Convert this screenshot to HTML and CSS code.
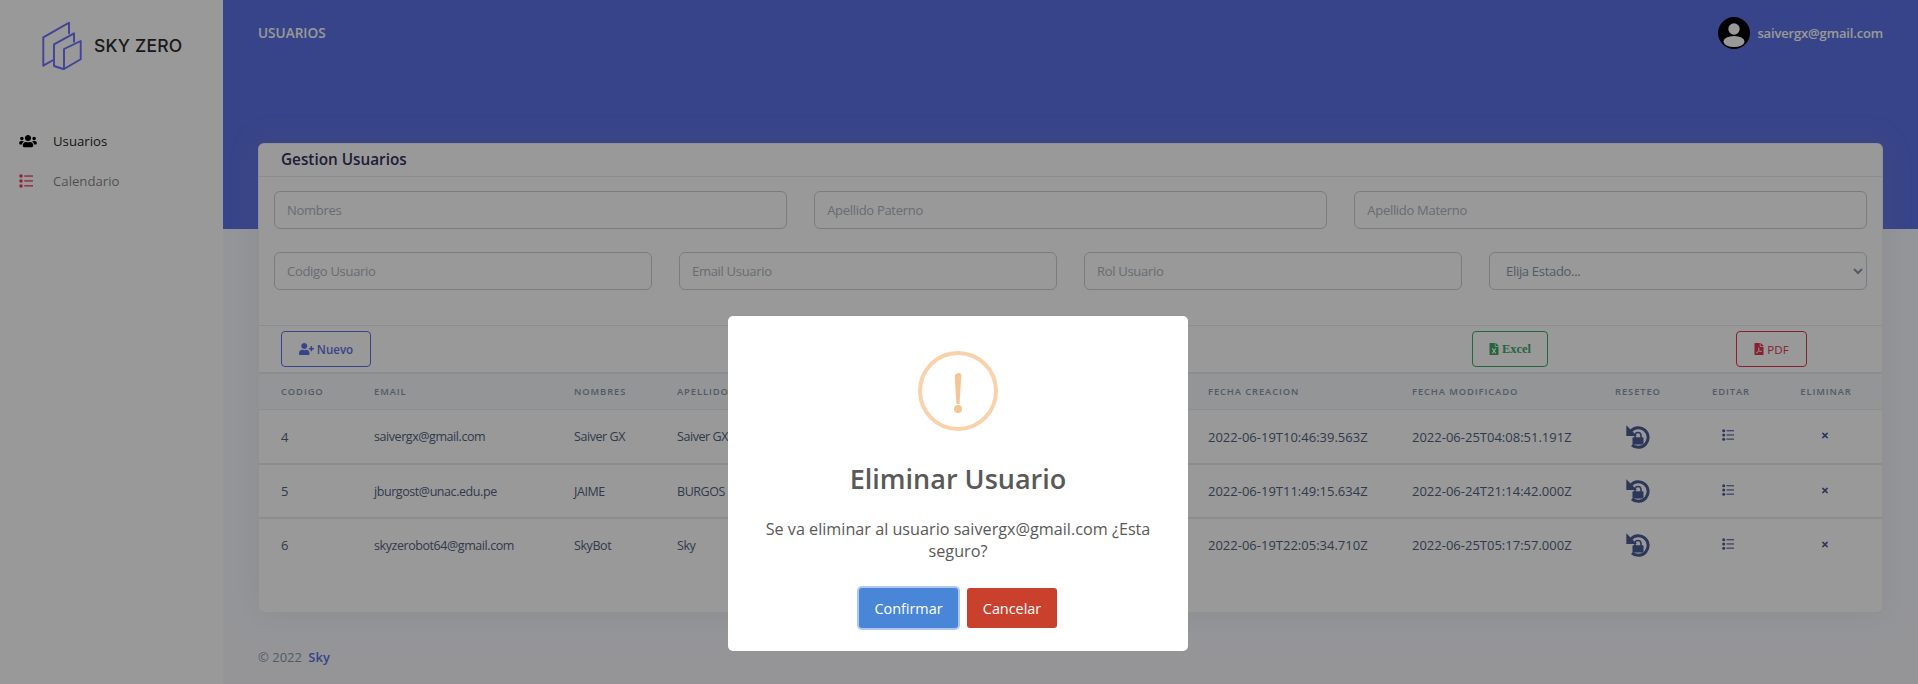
FILE: index.html
```html
<!DOCTYPE html>
<html lang="es">
<head>
    <meta charset="UTF-8">
    <meta name="viewport" content="width=device-width, initial-scale=1.0">
    <title>Usuarios</title>
    <link rel="stylesheet" href="styles.css">
</head>
<body>
    <svg class="icon-defs">
        <symbol id="i-list" viewBox="0 0 12 12">
            <circle cx="1.700" cy="1.800" r="1.500"/><circle cx="1.700" cy="6" r="1.500"/><circle cx="1.700" cy="10.200" r="1.500"/>
            <rect x="4.500" y="1.200" width="7.500" height="1.100"/><rect x="4.500" y="5.400" width="7.500" height="1.100"/><rect x="4.500" y="9.600" width="7.500" height="1.100"/>
        </symbol>
        <symbol id="i-times" viewBox="0 0 352 512"><path d="M242.72 256l100.07-100.07c12.28-12.28 12.28-32.19 0-44.48l-22.24-22.24c-12.28-12.28-32.19-12.28-44.48 0L176 189.28 75.93 89.21c-12.28-12.28-32.19-12.28-44.48 0L9.21 111.45c-12.28 12.28-12.28 32.19 0 44.48L109.28 256 9.21 356.07c-12.28 12.28-12.28 32.19 0 44.48l22.24 22.24c12.28 12.28 32.2 12.28 44.48 0L176 322.72l100.07 100.07c12.28 12.28 32.2 12.28 44.48 0l22.24-22.24c12.28-12.28 12.28-32.19 0-44.48L242.72 256z"/></symbol>
        <symbol id="i-reset" viewBox="0 0 24 24">
            <path d="M5 6A9.800 9.800 0 1 1 6 20" fill="none" stroke="currentColor" stroke-width="3"/>
            <path d="M0.300 0.300L0.300 11L11 11z"/>
            <rect x="6.500" y="12.300" width="11" height="7.200" rx="1"/>
            <path d="M9 13V10.500a3 3 0 0 1 6 0V13" fill="none" stroke="currentColor" stroke-width="1.600"/>
        </symbol>
    </svg>

    <div class="layout">
        <aside class="sidebar">
            <div class="brand">
                <svg class="brand-logo" viewBox="0 0 40 48">
                    <path d="M11.300 38L1.300 43.700V15.300L27 0.700V11.300"/>
                    <path d="M32 19.700V11.300L12 22.300V44L21.300 47"/>
                    <path d="M22 27L38.700 19V37.300L22 47z"/>
                </svg>
                <span class="brand-name">SKY ZERO</span>
            </div>
            <nav class="side-nav">
                <a class="side-link active">
                    <svg class="side-icon" viewBox="0 0 640 512"><path d="M96 224c35.300 0 64-28.700 64-64s-28.700-64-64-64-64 28.700-64 64 28.700 64 64 64zm448 0c35.300 0 64-28.700 64-64s-28.700-64-64-64-64 28.700-64 64 28.700 64 64 64zm32 32h-64c-17.600 0-33.500 7.100-45.100 18.600 40.300 22.100 68.900 62 75.100 109.400h66c17.700 0 32-14.300 32-32v-32c0-35.300-28.700-64-64-64zm-256 0c61.900 0 112-50.100 112-112S381.900 32 320 32 208 82.100 208 144s50.100 112 112 112zm76.800 32h-8.300c-20.800 10-43.900 16-68.500 16s-47.600-6-68.500-16h-8.300C179.600 288 128 339.600 128 403.200V432c0 26.500 21.500 48 48 48h288c26.500 0 48-21.500 48-48v-28.800c0-63.600-51.600-115.200-115.200-115.200zm-223.700-13.400C161.500 263.100 145.600 256 128 256H64c-35.300 0-64 28.700-64 64v32c0 17.700 14.300 32 32 32h65.900c6.300-47.400 34.900-87.300 75.200-109.400z"/></svg>
                    Usuarios
                </a>
                <a class="side-link">
                    <svg class="side-icon red"><use href="#i-list"/></svg>
                    Calendario
                </a>
            </nav>
        </aside>

        <div class="main">
            <header class="topbar">
                <span class="page-title">USUARIOS</span>
                <div class="user">
                    <svg class="avatar" viewBox="0 0 32 32">
                        <circle cx="16" cy="16" r="16" fill="#000"/>
                        <circle cx="16" cy="12" r="5.700" fill="#fff"/>
                        <ellipse cx="16" cy="24.500" rx="10.500" ry="5.500" fill="#fff"/>
                    </svg>
                    <span>saivergx@gmail.com</span>
                </div>
            </header>

            <section class="card">
                <h3 class="card-title">Gestion Usuarios</h3>
                <div class="filters">
                    <div class="filter-row three">
                        <input type="text" placeholder="Nombres">
                        <input type="text" placeholder="Apellido Paterno">
                        <input type="text" placeholder="Apellido Materno">
                    </div>
                    <div class="filter-row four">
                        <input type="text" placeholder="Codigo Usuario">
                        <input type="text" placeholder="Email Usuario">
                        <input type="text" placeholder="Rol Usuario">
                        <select>
                            <option>Elija Estado...</option>
                        </select>
                    </div>
                </div>
                <div class="toolbar">
                    <button class="btn-outline blue btn-new">
                        <svg viewBox="0 0 640 512"><path d="M624 208h-64v-64c0-8.800-7.200-16-16-16h-32c-8.800 0-16 7.200-16 16v64h-64c-8.800 0-16 7.200-16 16v32c0 8.800 7.200 16 16 16h64v64c0 8.800 7.200 16 16 16h32c8.800 0 16-7.200 16-16v-64h64c8.800 0 16-7.200 16-16v-32c0-8.800-7.200-16-16-16zm-400 48c70.700 0 128-57.300 128-128S294.700 0 224 0 96 57.300 96 128s57.300 128 128 128zm89.600 32h-16.700c-22.200 10.200-46.900 16-72.900 16s-50.600-5.800-72.900-16h-16.700C60.200 288 0 348.200 0 422.400V464c0 26.500 21.500 48 48 48h352c26.500 0 48-21.500 48-48v-41.600c0-74.200-60.200-134.400-134.400-134.400z"/></svg>
                        Nuevo
                    </button>
                    <button class="btn-outline green btn-excel">
                        <svg viewBox="0 0 384 512"><path d="M224 136V0H24C10.700 0 0 10.700 0 24v464c0 13.300 10.700 24 24 24h336c13.300 0 24-10.700 24-24V160H248c-13.200 0-24-10.800-24-24zm60.100 106.500L224 336l60.100 93.500c5.100 8-.6 18.500-10.100 18.500h-34.900c-4.400 0-8.500-2.400-10.600-6.300C208.900 405.500 192 373 192 373c-6.400 14.800-10 20-36.600 68.800-2.100 3.900-6.100 6.300-10.500 6.300H110c-9.500 0-15.200-10.500-10.100-18.500l60.300-93.500-60.300-93.500c-5.200-8 .6-18.500 10.100-18.500h34.800c4.400 0 8.500 2.400 10.600 6.300 26.100 48.800 20 33.600 36.600 68.500 0 0 6.100-11.700 36.600-68.500 2.100-3.900 6.200-6.300 10.600-6.300H274c9.500-.1 15.200 10.400 10.100 18.400zM384 121.900v6.100H256V0h6.100c6.400 0 12.500 2.500 17 7l97.900 98c4.500 4.500 7 10.600 7 16.900z"/></svg>
                        Excel
                    </button>
                    <button class="btn-outline red btn-pdf">
                        <svg viewBox="0 0 384 512"><path d="M181.900 256.100c-5-16-4.900-46.900-2-46.900 8.400 0 7.600 36.900 2 46.900zm-1.700 47.200c-7.700 20.200-17.300 43.300-28.400 62.700 18.300-7 39-17.200 62.900-21.900-12.700-9.600-24.900-23.400-34.500-40.800zM86.100 428.100c0 .8 13.200-5.400 34.900-40.200-6.700 6.300-29.100 24.500-34.900 40.200zM248 160h136v328c0 13.300-10.700 24-24 24H24c-13.300 0-24-10.700-24-24V24C0 10.700 10.700 0 24 0h200v136c0 13.200 10.800 24 24 24zm-8 171.800c-20-12.200-33.300-29-42.700-53.800 4.500-18.500 11.600-46.600 6.200-64.200-4.700-29.400-42.400-26.500-47.800-6.800-5 18.300-.4 44.100 8.100 77-11.600 27.600-28.700 64.600-40.800 85.800-.1 0-.1.100-.2.100-27.100 13.900-73.600 44.500-54.500 68 5.600 6.900 16 10 21.500 10 17.900 0 35.700-18 61.100-61.800 25.800-8.500 54.100-19.100 79-23.200 21.700 11.800 47.100 19.500 64 19.500 29.200 0 31.200-32 19.700-43.400-13.900-13.600-54.300-9.700-73.600-7.200zM377 105L279 7c-4.500-4.500-10.600-7-17-7h-6v128h128v-6.100c0-6.300-2.500-12.400-7-16.900zm-74.100 255.300c4.100-2.700-2.500-11.900-42.800-9 37.100 15.800 42.800 9 42.800 9z"/></svg>
                        PDF
                    </button>
                </div>
                <table class="users">
                    <colgroup>
                        <col class="c-code"><col class="c-email"><col class="c-name"><col class="c-last">
                        <col class="c-date"><col class="c-mod"><col class="c-reset"><col class="c-edit"><col class="c-del">
                    </colgroup>
                    <thead>
                        <tr>
                            <th>Codigo</th><th>Email</th><th>Nombres</th><th>Apellido Paterno</th>
                            <th>Fecha Creacion</th><th>Fecha Modificado</th>
                            <th class="center">Reseteo</th><th class="center">Editar</th><th class="center">Eliminar</th>
                        </tr>
                    </thead>
                    <tbody>
                        <tr>
                            <td class="date">4</td><td>saivergx@gmail.com</td><td>Saiver GX</td><td>Saiver GX</td>
                            <td class="date">2022-06-19T10:46:39.563Z</td><td class="date">2022-06-25T04:08:51.191Z</td>
                            <td class="center"><svg class="ic-reset"><use href="#i-reset"/></svg></td>
                            <td class="center"><svg class="ic-edit"><use href="#i-list"/></svg></td>
                            <td class="center"><svg class="ic-del"><use href="#i-times"/></svg></td>
                        </tr>
                        <tr>
                            <td class="date">5</td><td>jburgost@unac.edu.pe</td><td>JAIME</td><td>BURGOS</td>
                            <td class="date">2022-06-19T11:49:15.634Z</td><td class="date">2022-06-24T21:14:42.000Z</td>
                            <td class="center"><svg class="ic-reset"><use href="#i-reset"/></svg></td>
                            <td class="center"><svg class="ic-edit"><use href="#i-list"/></svg></td>
                            <td class="center"><svg class="ic-del"><use href="#i-times"/></svg></td>
                        </tr>
                        <tr>
                            <td class="date">6</td><td>skyzerobot64@gmail.com</td><td>SkyBot</td><td>Sky</td>
                            <td class="date">2022-06-19T22:05:34.710Z</td><td class="date">2022-06-25T05:17:57.000Z</td>
                            <td class="center"><svg class="ic-reset"><use href="#i-reset"/></svg></td>
                            <td class="center"><svg class="ic-edit"><use href="#i-list"/></svg></td>
                            <td class="center"><svg class="ic-del"><use href="#i-times"/></svg></td>
                        </tr>
                    </tbody>
                </table>
            </section>

            <footer class="footer">© 2022 <a>Sky</a></footer>
        </div>
    </div>

    <div class="overlay">
        <div class="modal">
            <div class="warn-icon"><span class="warn-bar"></span><span class="warn-dot"></span></div>
            <h2>Eliminar Usuario</h2>
            <p>Se va eliminar al usuario saivergx@gmail.com ¿Esta seguro?</p>
            <div class="modal-actions">
                <button class="btn-confirm">Confirmar</button>
                <button class="btn-cancel">Cancelar</button>
            </div>
        </div>
    </div>
</body>
</html>
```

FILE: styles.css
```css
* {
    box-sizing: border-box;
}
html, body {
    height: 100%;
}
body {
    margin: 0;
    overflow: hidden;
    background-color: #f8f9fe;
    font-family: 'Open Sans', 'Liberation Sans', sans-serif;
    color: #525f7f;
}
.icon-defs {
    display: none;
}
.layout {
    display: flex;
    height: 100%;
}

/* sidebar */
.sidebar {
    flex: 0 0 223px;
    background: white;
}
.brand {
    display: flex;
    align-items: center;
    gap: 12px;
    padding: 22px 0 0 42px;
}
.brand-logo {
    width: 40px;
    height: 48px;
    fill: none;
    stroke: #6f6fff;
    stroke-width: 1.9;
    stroke-linejoin: round;
    stroke-linecap: round;
}
.brand-name {
    margin-top: -2px;
    font-family: Inter, 'Liberation Sans', sans-serif;
    font-size: 17.5px;
    font-weight: 500;
    letter-spacing: 0.2px;
    color: #2b2b2b;
    white-space: nowrap;
}
.side-nav {
    display: flex;
    flex-direction: column;
    padding-top: 51px;
}
.side-link {
    display: flex;
    align-items: center;
    height: 40px;
    padding-left: 19px;
    font-size: 13.2px;
    color: rgba(0,0,0,0.5);
}
.side-link.active {
    color: rgba(0,0,0,0.9);
}
.side-icon {
    width: 18px;
    height: 14px;
    margin-right: 16px;
    fill: #000;
}
.side-icon.red {
    width: 14px;
    margin-right: 20px;
    fill: #f5365c;
}

/* main */
.main {
    flex: 1;
    min-width: 0;
}
.topbar {
    display: flex;
    justify-content: space-between;
    height: 229px;
    padding: 17px 35px 0 35px;
    background-color: #5e72e4;
    color: white;
}
.page-title {
    font-size: 13.6px;
    font-weight: 600;
    line-height: 32px;
}
.user {
    display: flex;
    align-items: flex-start;
    gap: 7px;
    font-size: 13px;
    font-weight: 600;
    letter-spacing: -0.15px;
    line-height: 32px;
}
.avatar {
    width: 32px;
    height: 32px;
}

/* card */
.card {
    height: 470px;
    margin: -86px 35px 0 35px;
    background: white;
    border: 1px solid rgba(0,0,0,0.05);
    border-radius: 6px;
    box-shadow: 0 0 32px 0 rgba(136,152,170,0.15);
}
.card-title {
    height: 33px;
    margin: 0;
    padding-left: 22px;
    border-bottom: 1px solid #e9ecef;
    font-size: 15.3px;
    font-weight: 600;
    line-height: 31px;
    color: #32325d;
}
.filters {
    height: 149px;
    padding: 14px 15px 0 15px;
    border-bottom: 1px solid #e9ecef;
}
.filter-row {
    display: grid;
    gap: 27.5px;
    margin-bottom: 23px;
}
.filter-row.three {
    grid-template-columns: repeat(3, 1fr);
}
.filter-row.four {
    gap: 27px;
    grid-template-columns: repeat(4, 1fr);
}
input, select {
    width: 100%;
    height: 38px;
    padding: 0 12px;
    background: white;
    border: 1px solid #cad1d7;
    border-radius: 6px;
    font-family: inherit;
    font-size: 13px;
    letter-spacing: -0.3px;
    color: #8898aa;
}
input::placeholder {
    color: #adb5bd;
}
.toolbar {
    display: flex;
    height: 46px;
    padding: 5px 0 0 22px;
}
.btn-outline {
    display: flex;
    align-items: center;
    justify-content: center;
    gap: 3px;
    height: 36px;
    background: white;
    border: 1px solid;
    border-radius: 4px;
    font-family: inherit;
    font-size: 11.6px;
    font-weight: 600;
}
.btn-outline svg {
    height: 12px;
    fill: currentColor;
}
.btn-outline.blue {
    color: #5e72e4;
    border-color: #5e72e4;
}
.btn-outline.green {
    color: #3fa866;
    border-color: #3fa866;
}
.btn-outline.red {
    color: #e0374f;
    border-color: #e0374f;
}
.btn-new {
    width: 90px;
}
.btn-new svg {
    width: 15px;
}
.btn-excel {
    width: 76px;
    margin-left: auto;
    font-family: 'Liberation Serif', serif;
    font-size: 12.5px;
    font-weight: 700;
}
.btn-excel svg, .btn-pdf svg {
    width: 10px;
}
.btn-pdf {
    width: 71px;
    margin: 0 75px 0 188px;
    font-weight: 400;
}

/* table */
.users {
    width: 100%;
    table-layout: fixed;
    border-collapse: separate;
    border-spacing: 0;
}
.c-code { width: 115px; }
.c-email { width: 200px; }
.c-name { width: 103px; }
.c-last { width: 531px; }
.c-date { width: 204px; }
.c-mod { width: 183px; }
.c-reset { width: 86px; }
.c-edit { width: 100px; }
.c-del { width: 101px; }
.users th {
    height: 38px;
    padding: 0;
    background: #f6f9fc;
    border-top: 2px solid #e9ecef;
    border-bottom: 1px solid #e9ecef;
    font-size: 9.4px;
    font-weight: 600;
    letter-spacing: 0.9px;
    text-align: left;
    text-transform: uppercase;
    color: #8898aa;
    white-space: nowrap;
}
.users td {
    height: 54px;
    padding: 0;
    border-top: 2px solid #e9ecef;
    font-size: 12.5px;
    letter-spacing: -0.43px;
    white-space: nowrap;
}
.users td.date {
    font-size: 13px;
    letter-spacing: 0;
}
.users tbody tr:first-child td {
    height: 53px;
    border-top: 0;
}
.users th:first-child, .users td:first-child {
    padding-left: 22px;
}
.users th:last-child, .users td:last-child {
    padding-right: 11px;
}
.users .center {
    text-align: center;
}
.users svg {
    fill: #4b5c96;
    vertical-align: middle;
}
.ic-reset {
    width: 24px;
    height: 24px;
    color: #4b5c96;
}
.ic-edit {
    width: 12px;
    height: 12px;
    margin: 0 6px 4px 0;
}
.ic-del {
    width: 6px;
    height: 9px;
    margin: 0 2px 4px 0;
}

/* footer */
.footer {
    padding: 34px 0 0 35px;
    font-size: 13px;
    line-height: 20px;
    color: #8898aa;
}
.footer a {
    margin-left: 3px;
    font-weight: 600;
    color: #5e72e4;
}

/* sweet alert */
.overlay {
    position: fixed;
    inset: 0;
    display: flex;
    justify-content: center;
    align-items: flex-start;
    padding-top: 316px;
    background: rgba(0,0,0,0.4);
}
.modal {
    width: 460px;
    height: 335px;
    margin-left: -2px;
    padding: 35px 17px 0 17px;
    background: white;
    border-radius: 5px;
    text-align: center;
}
.warn-icon {
    position: relative;
    width: 80px;
    height: 80px;
    margin: 0 auto;
    border: 4px solid #f9d2ab;
    border-radius: 50%;
}
.warn-bar {
    position: absolute;
    top: 18px;
    left: 32.500px;
    width: 7px;
    height: 31px;
    background: #f7c592;
    border-radius: 4px 4px 1px 1px;
    clip-path: polygon(0 0, 100% 0, 72% 100%, 28% 100%);
}
.warn-dot {
    position: absolute;
    top: 50px;
    left: 32px;
    width: 8px;
    height: 8px;
    background: #f7c592;
    border-radius: 50%;
}
.modal h2 {
    margin: 28px 0 0 0;
    font-size: 27px;
    font-weight: 600;
    line-height: 40px;
    color: #595959;
}
.modal p {
    margin: 19px 0 0 0;
    font-size: 16.2px;
    line-height: 22px;
    color: #595959;
}
.modal-actions {
    display: flex;
    justify-content: center;
    gap: 9px;
    margin-top: 26px;
}
.modal-actions button {
    height: 40px;
    border: 0;
    border-radius: 3px;
    font-family: inherit;
    font-size: 14.4px;
    font-weight: 500;
    color: white;
}
.btn-confirm {
    width: 99px;
    background: #4a86d8;
    box-shadow: 0 0 0 2px rgba(74,134,216,0.45);
}
.btn-cancel {
    width: 90px;
    background: #c9412d;
}
```
